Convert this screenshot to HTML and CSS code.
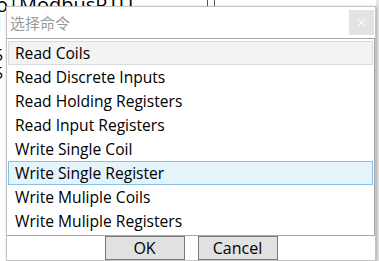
FILE: index.html
```html
<!DOCTYPE html>
<html lang="zh">
<head>
    <meta charset="utf-8">
    <title>选择命令</title>
    <link rel="stylesheet" href="styles.css">
</head>
<body>
    <!-- Hauptfenster im Hintergrund -->
    <div class="backdrop">
        <div class="bg-text bg-title">o|ModbusRTU</div>
        <div class="bg-text bg-l">l</div>
        <div class="bg-text bg-five1">5</div>
        <div class="bg-text bg-five2">5</div>
        <div class="bg-line bg-line1"></div>
        <div class="bg-line bg-line2"></div>
        <div class="bg-right"></div>
    </div>

    <!-- Dialog -->
    <div class="dialog">
        <div class="title-bar">
            <span class="title">选择命令</span>
            <span class="close-btn">×</span>
        </div>

        <ul class="cmd-list">
            <li class="cmd-item focused">Read Coils</li>
            <li class="cmd-item">Read Discrete Inputs</li>
            <li class="cmd-item">Read Holding Registers</li>
            <li class="cmd-item">Read Input Registers</li>
            <li class="cmd-item">Write Single Coil</li>
            <li class="cmd-item selected">Write Single Register</li>
            <li class="cmd-item">Write Muliple Coils</li>
            <li class="cmd-item">Write Muliple Registers</li>
        </ul>

        <div class="button-row">
            <button class="dlg-button">OK</button>
            <button class="dlg-button">Cancel</button>
        </div>
    </div>
</body>
</html>
```
FILE: styles.css
```css
body {
    margin: 0;
    width: 379px;
    height: 261px;
    overflow: hidden;
    background-color: #fff;
    font-family: "Segoe UI", "Open Sans", "Noto Sans CJK SC", sans-serif;
    position: relative;
}

.backdrop {
    position: absolute;
    left: 0;
    top: 0;
    width: 379px;
    height: 261px;
}

.bg-text {
    position: absolute;
    color: #000;
    font-size: 16px;
    line-height: 18px;
}

.bg-title {
    left: -4px;
    top: -7px;
    font-size: 20px;
    line-height: 24px;
}

.bg-l {
    left: -3px;
    top: 15px;
}

.bg-five1 {
    left: -6px;
    top: 46px;
}

.bg-five2 {
    left: -6px;
    top: 64px;
}

.bg-line {
    position: absolute;
    top: 0;
    width: 1px;
    height: 261px;
    background-color: #555;
}

.bg-line1 {
    left: 207px;
}

.bg-line2 {
    left: 214px;
}

.bg-right {
    position: absolute;
    left: 376px;
    top: 0;
    width: 3px;
    height: 261px;
    background-color: #e6e6e6;
}

.dialog {
    position: absolute;
    left: 6px;
    top: 6px;
    width: 368px;
    height: 253px;
    background-color: #fff;
    border: 1px solid #c4c4c4;
    box-shadow: 1px 1px 3px rgba(0, 0, 0, 0.25);
    display: flex;
    flex-direction: column;
}

.title-bar {
    height: 31px;
    display: flex;
    align-items: center;
    justify-content: space-between;
    padding-left: 3px;
    padding-right: 1px;
}

.title {
    color: #9a9a9a;
    font-size: 15px;
}

.close-btn {
    width: 25px;
    height: 25px;
    background-color: #e3e3e3;
    color: #fafafa;
    font-size: 18px;
    line-height: 24px;
    text-align: center;
}

.cmd-list {
    list-style-type: none;
    margin: 0;
    padding: 2px 1px 0 1px;
    height: 194px;
    border-top: 1px solid #a8a8a8;
    border-bottom: 1px solid #a8a8a8;
    border-right: 1px solid #a8a8a8;
}

.cmd-item {
    height: 22px;
    line-height: 22px;
    padding-left: 6px;
    border: 1px solid transparent;
    font-size: 15.6px;
    color: #000;
}

.focused {
    background-color: #f3f3f3;
    border-color: #dadada;
}

.selected {
    background-color: #e5f3fb;
    border-color: #84c2ea;
}

.button-row {
    flex: 1;
    display: flex;
    justify-content: center;
    align-items: flex-end;
    gap: 13px;
}

.dlg-button {
    width: 80px;
    height: 24px;
    margin: 0;
    padding: 0;
    background-color: #e1e1e1;
    border: 1px solid #7a7a7a;
    font-family: inherit;
    font-size: 16px;
    line-height: 22px;
    color: #000;
}
```
